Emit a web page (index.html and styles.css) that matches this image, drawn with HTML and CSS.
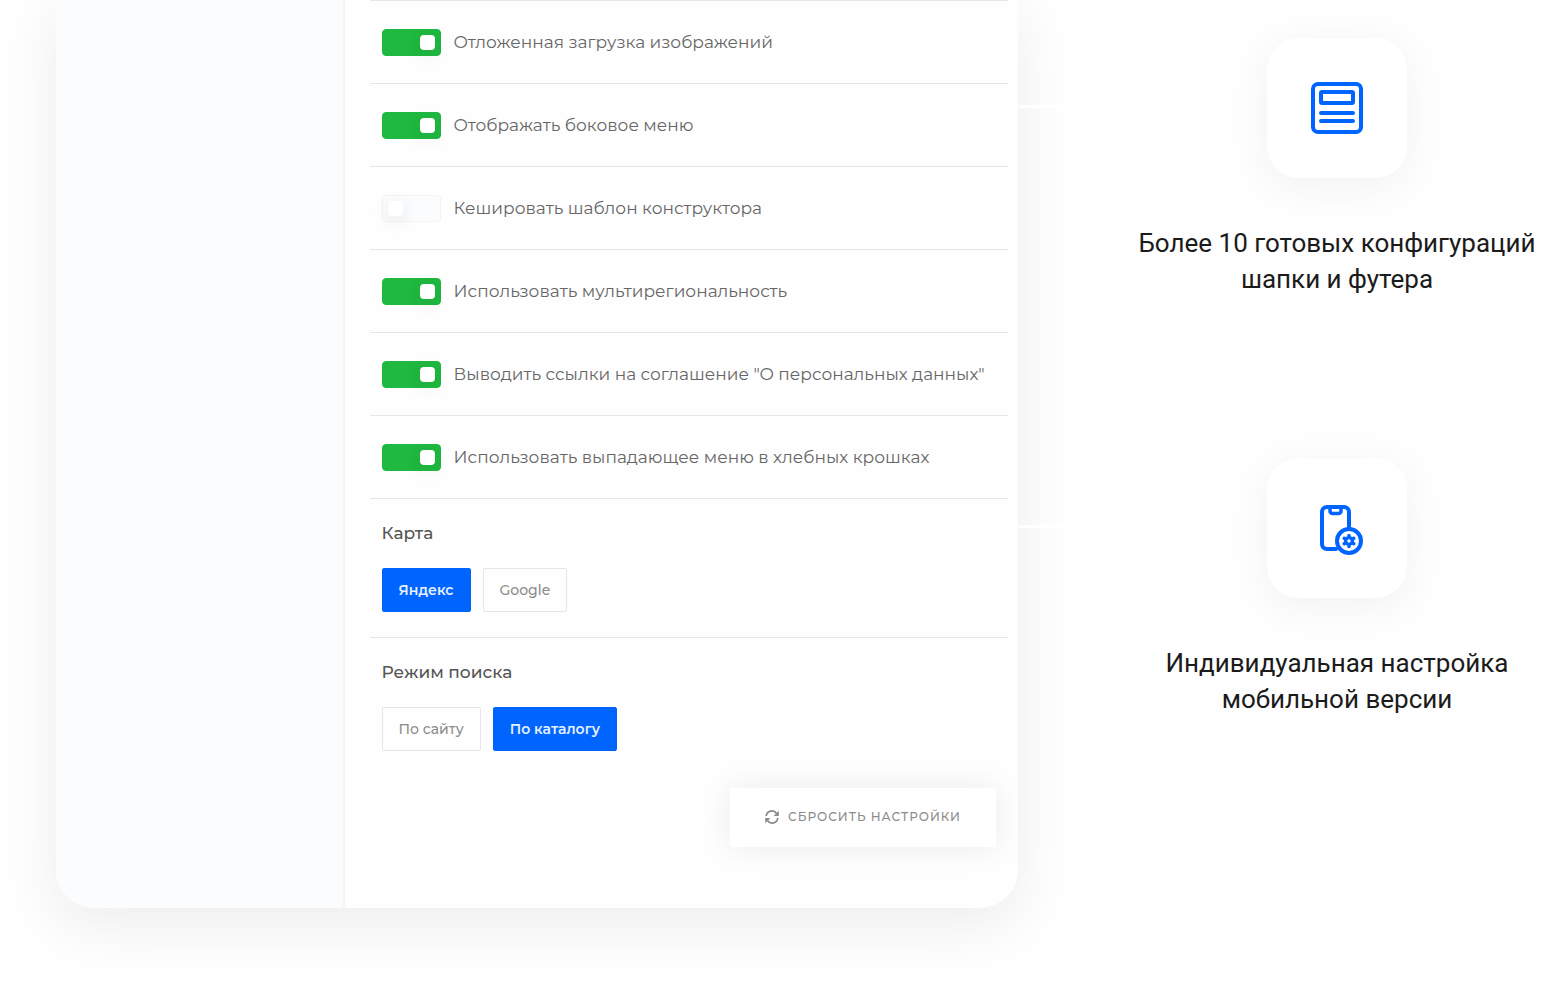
FILE: index.html
```html
<!DOCTYPE html>
<html lang="ru">
<head>
<meta charset="utf-8">
<meta name="viewport" content="width=device-width, initial-scale=1">
<title>Настройки</title>
<link rel="stylesheet" href="styles.css">
</head>
<body>
<main class="page">
  <section class="panel">
    <aside class="panel-side"></aside>
    <form class="settings">
      <ul class="toggles">
        <li class="toggle-row"><input class="switch" type="checkbox" id="lazy" checked><label for="lazy">Отложенная загрузка изображений</label></li>
        <li class="toggle-row"><input class="switch" type="checkbox" id="side" checked><label for="side">Отображать боковое меню</label></li>
        <li class="toggle-row"><input class="switch" type="checkbox" id="cache"><label for="cache">Кешировать шаблон конструктора</label></li>
        <li class="toggle-row"><input class="switch" type="checkbox" id="region" checked><label for="region">Использовать мультирегиональность</label></li>
        <li class="toggle-row"><input class="switch" type="checkbox" id="personal" checked><label for="personal">Выводить ссылки на соглашение "О персональных данных"</label></li>
        <li class="toggle-row"><input class="switch" type="checkbox" id="crumbs" checked><label for="crumbs">Использовать выпадающее меню в хлебных крошках</label></li>
      </ul>
      <div class="group" role="group" aria-labelledby="map-title">
        <h3 class="group-title" id="map-title">Карта</h3>
        <div class="options">
          <button class="option option-active" type="button" aria-pressed="true">Яндекс</button>
          <button class="option" type="button" aria-pressed="false">Google</button>
        </div>
      </div>
      <div class="group" role="group" aria-labelledby="search-title">
        <h3 class="group-title" id="search-title">Режим поиска</h3>
        <div class="options">
          <button class="option" type="button" aria-pressed="false">По сайту</button>
          <button class="option option-active" type="button" aria-pressed="true">По каталогу</button>
        </div>
      </div>
      <div class="actions">
        <button class="reset" type="reset">
          <svg width="14" height="14" viewBox="0 0 14 14" fill="none" stroke="currentColor" stroke-width="1.800" aria-hidden="true">
            <path d="M1.200 6A5.600 5.600 0 0 1 11.500 3.600"/>
            <path d="M12.800 8A5.600 5.600 0 0 1 2.500 10.400"/>
            <path d="M13.800.8v5.200H8.600zM.2 13.200V8h5.200z" fill="currentColor" stroke="none"/>
          </svg>
          <span>СБРОСИТЬ НАСТРОЙКИ</span>
        </button>
      </div>
    </form>
  </section>
  <section class="features">
    <article class="feature">
      <div class="tile">
        <svg class="tile-icon" width="52" height="52" viewBox="0 0 52 52" fill="none" stroke="#0065ff" stroke-width="4" stroke-linecap="round" stroke-linejoin="round" aria-hidden="true">
          <rect x="2" y="2" width="48" height="48" rx="5"/>
          <rect x="10" y="10" width="32" height="11" rx="1"/>
          <path d="M10 31h32M10 39h32"/>
        </svg>
      </div>
      <p class="feature-text">Более 10 готовых конфигураций<br>шапки и футера</p>
    </article>
    <article class="feature">
      <div class="tile">
        <svg class="tile-icon" width="52" height="52" viewBox="0 0 52 52" fill="none" stroke="#0065ff" stroke-width="4" stroke-linecap="round" stroke-linejoin="round" aria-hidden="true">
          <path d="M25 47H16a5 5 0 0 1-5-5V10a5 5 0 0 1 5-5h17a5 5 0 0 1 5 5v16"/>
          <path d="M19 6v3a2.500 2.500 0 0 0 2.500 2.500h6A2.500 2.500 0 0 0 30 9V6" stroke-width="3.500"/>
          <circle cx="38" cy="39" r="12"/>
          <circle cx="38" cy="39" r="3.400" stroke-width="3.400"/>
          <path d="M38 34v-.5M38 44v.5M33.700 36.500l-.4-.2M42.300 36.500l.4-.2M33.700 41.500l-.4.2M42.300 41.500l.4.200" stroke-width="3.600"/>
        </svg>
      </div>
      <p class="feature-text">Индивидуальная настройка<br>мобильной версии</p>
    </article>
  </section>
</main>
</body>
</html>
```
FILE: styles.css
```css
* {
  box-sizing: border-box;
}

body {
  margin: 0;
  background: #fefefe;
  color: #1b1b1b;
  font-family: Roboto, sans-serif;
  overflow-x: hidden;
}

.page {
  display: grid;
  grid-template-columns: minmax(0, 962fr) minmax(0, 438fr);
  column-gap: 100px;
  align-items: start;
  padding: 0 0 73px 56px;
}

.panel {
  display: grid;
  grid-template-columns: minmax(0, 3fr) minmax(0, 7fr);
  background: #fefefe;
  border-radius: 0 0 38px 38px;
  box-shadow: 0 16px 56px rgba(0, 0, 0, 0.07);
}

.panel-side {
  background: #fbfcfe;
  border-right: 2px solid #f5f5f6;
  border-bottom-left-radius: 38px;
}

.settings {
  padding: 0 10px 61px 25px;
  font-family: Montserrat, Inter, sans-serif;
}

.toggles {
  list-style: none;
  margin: 0;
  padding: 0;
  border-top: 1px solid #e6e6e6;
}

.toggle-row {
  display: flex;
  align-items: center;
  gap: 13px;
  padding: 28px 12px 27px;
  border-bottom: 1px solid #e6e6e6;
  color: #666;
  font-size: 17px;
  line-height: 27px;
  white-space: nowrap;
}

.switch {
  appearance: none;
  flex: none;
  display: flex;
  align-items: center;
  width: 59px;
  height: 27px;
  margin: 0;
  padding: 0 5px;
  background: #fbfcfe;
  border: 1px solid #f3f3f4;
  border-radius: 4px;
}

.switch::before {
  content: "";
  width: 15px;
  height: 15px;
  background: #fff;
  border-radius: 4px;
  box-shadow: 0 4px 18px rgba(0, 0, 0, 0.1);
}

.switch:checked {
  justify-content: flex-end;
  background: #1fb840;
  border-color: #1fb840;
}

.group {
  padding: 23px 12px 25px;
}

.group + .group {
  border-top: 1px solid #e6e6e6;
}

.group-title {
  margin: 0 0 24px;
  color: #555;
  font-size: 17px;
  font-weight: 500;
  line-height: 22px;
}

.options {
  display: flex;
  gap: 12px;
}

.option {
  height: 44px;
  padding: 0 16px 1px;
  background: #fefefe;
  border: 1px solid #e6e6e6;
  border-radius: 2px;
  color: #8c8c8c;
  font: 500 14px Montserrat, Inter, sans-serif;
}

.option-active {
  background: #0065ff;
  border-color: #0065ff;
  color: #e6f0ff;
  font-weight: 600;
}

.actions {
  display: flex;
  justify-content: flex-end;
  padding: 12px 12px 0;
}

.reset {
  display: flex;
  align-items: center;
  justify-content: center;
  gap: 9px;
  min-width: 266px;
  height: 59px;
  padding: 0 32px 2px;
  background: #fff;
  border: 0;
  border-radius: 2px;
  box-shadow: 0 0 32px rgba(0, 0, 0, 0.08);
  color: #8c8c8c;
  font: 500 12px Montserrat, Inter, sans-serif;
  letter-spacing: 1px;
}

.features {
  display: grid;
  row-gap: 161px;
  padding-top: 38px;
}

.feature {
  display: flex;
  flex-direction: column;
  align-items: center;
  gap: 47px;
}

.tile {
  position: relative;
  display: grid;
  place-items: center;
  width: 140px;
  height: 140px;
  background: #fff;
  border-radius: 32px;
  box-shadow: 0 8px 40px rgba(0, 0, 0, 0.05);
}

.tile-icon {
  overflow: visible;
}

/* connector between the tile and the panel, fading out towards the tile */
.tile::before {
  content: "";
  position: absolute;
  top: 67px;
  right: 100%;
  width: 248px;
  height: 3px;
  background: linear-gradient(to right, #fff 40%, transparent 60%);
}

.feature-text {
  margin: 0;
  font-size: 26px;
  line-height: 36px;
  text-align: center;
}
```
